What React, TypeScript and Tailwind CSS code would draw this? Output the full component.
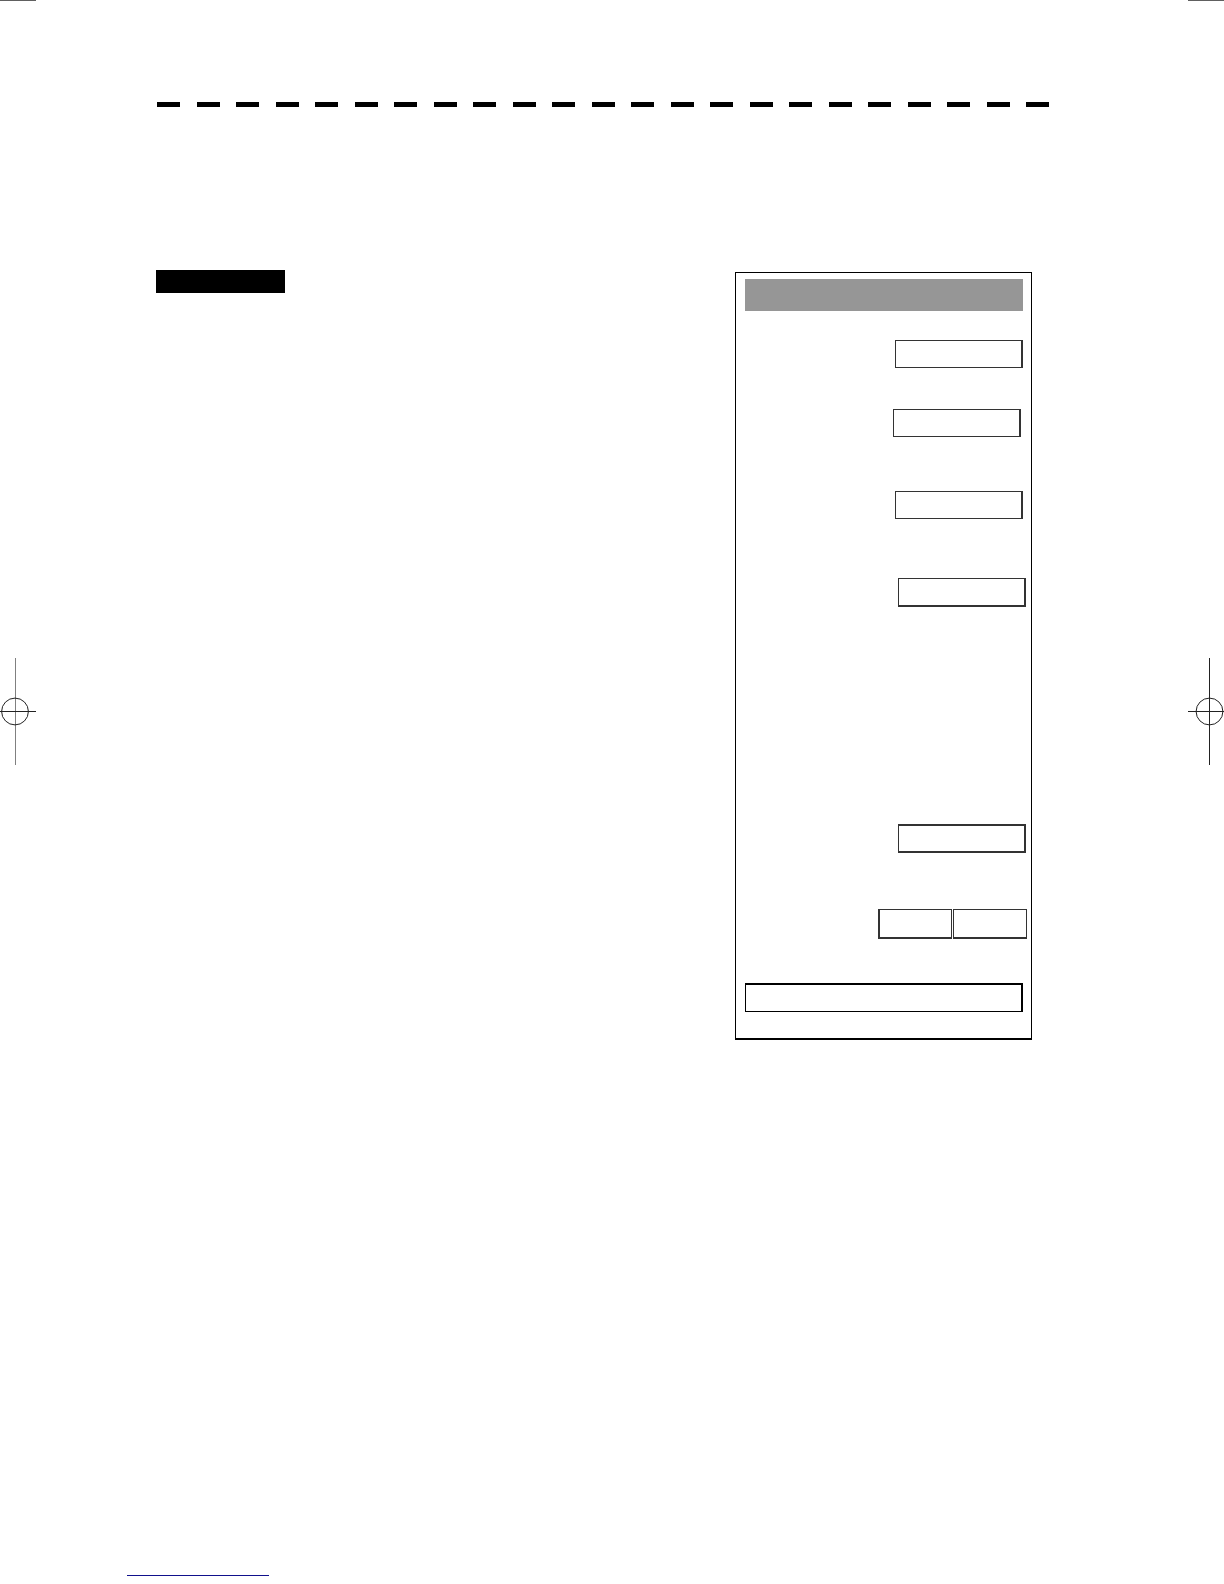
import clsx from "clsx";

interface MarkProps {
    side: "left" | "right";
}

interface FieldProps {
    label: string;
    className?: string;
}

const DASHES = Array.from({ length: 23 }, (_, i) => i);

function RegistrationMark({ side }: MarkProps) {
    const x = side === "left" ? 15 : 21;

    return (
        <svg width="36" height="107" viewBox="0 0 36 107" fill="none" aria-hidden="true">
            <path d={`M${x + 0.5} 0V107`} stroke={side === "left" ? "#808080" : "#222222"} />
            <path d="M0 53.5H36" stroke="#222222" />
            <circle cx={side === "left" ? 15 : 21.5} cy="53.5" r="13.4" stroke="#222222" />
        </svg>
    );
}

function PageEdge({ side }: MarkProps) {
    return (
        <div className="flex flex-col">
            <div className="h-px bg-[#606060]" />
            <div className="pt-[657px]">
                <RegistrationMark side={side} />
            </div>
        </div>
    );
}

function Field({ label, className }: FieldProps) {
    return (
        <button
            type="button"
            aria-label={label}
            className={clsx("block w-32 border border-r-2 border-[#333333] bg-white", className)}
        />
    );
}

function Panel() {
    return (
        <section className="w-[297px] shrink-0 border border-b-2 border-black pt-1.5 pb-[26px]">
            <div className="mr-2 ml-[9px] h-8 bg-[#969696]" />

            <div className="flex flex-col items-end pt-[29px] pr-2">
                <Field label="Option 1" className="h-7" />
                <Field label="Option 2" className="mt-[41px] mr-0.5 h-7" />
                <Field label="Option 3" className="mt-[54px] h-7" />
            </div>

            <div className="flex flex-col items-end pt-[59px] pr-[5px]">
                <Field label="Option 4" className="h-[29px] border-b-2" />
                <Field label="Option 5" className="mt-[217px] h-[29px] border-y-2" />
            </div>

            <div className="flex justify-end gap-px pt-14 pr-1">
                <button
                    type="button"
                    aria-label="Previous"
                    className="h-[30px] w-[74px] border border-b-2 border-l-2 border-[#333333] bg-white"
                />
                <button
                    type="button"
                    aria-label="Next"
                    className="h-[30px] w-[74px] border border-b-2 border-[#333333] bg-white"
                />
            </div>

            <div className="mt-11 mr-2 ml-[9px] flex">
                <button
                    type="button"
                    aria-label="Confirm"
                    className="h-[29px] flex-1 border border-t-2 border-r-2 border-black bg-white"
                />
            </div>
        </section>
    );
}

export default function App() {
    return (
        <div className="grid min-h-screen grid-cols-[36px_1fr_36px] bg-white font-['Liberation_Sans',sans-serif]">
            <PageEdge side="left" />

            <div className="flex flex-col">
                <header className="flex justify-between pt-[102px] pr-[139px] pl-[121px]">
                    {DASHES.map((dash) => (
                        <span key={dash} className="h-[5px] w-[23px] bg-black" />
                    ))}
                </header>

                <main className="flex items-start justify-between pt-[163px] pr-[156px] pl-[120px]">
                    <h1 aria-label="Section" className="h-[23px] w-[129px] bg-black" />
                    <div className="pt-0.5">
                        <Panel />
                    </div>
                </main>

                <footer className="mt-auto flex pt-10 pb-2 pl-[91px]">
                    <a href="#top" aria-label="Back to top" className="h-5 w-[142px] border-b border-[#11118c]" />
                </footer>
            </div>

            <PageEdge side="right" />
        </div>
    );
}
